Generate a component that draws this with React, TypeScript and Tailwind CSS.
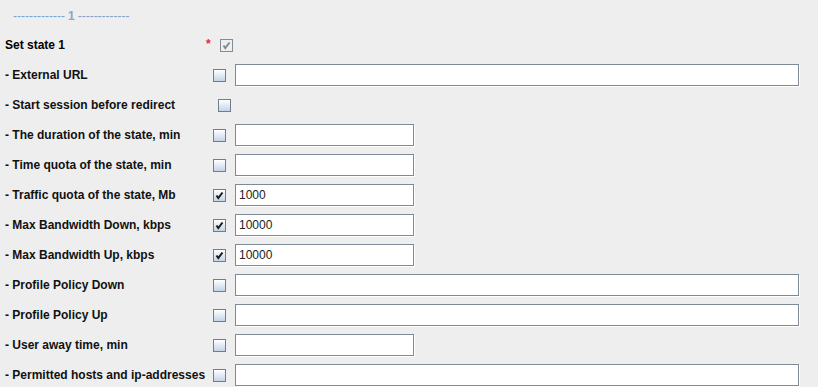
import React from "react";

type Row = {
  label: string;
  checked?: boolean;
  value?: string;
  input?: "wide" | "narrow" | null;
  boxMargin?: string;
};

const rows: Row[] = [
  { label: "- External URL", input: "wide" },
  { label: "- Start session before redirect", input: null, boxMargin: "ml-[5px]" },
  { label: "- The duration of the state, min", input: "narrow" },
  { label: "- Time quota of the state, min", input: "narrow" },
  { label: "- Traffic quota of the state, Mb", input: "narrow", checked: true, value: "1000" },
  { label: "- Max Bandwidth Down, kbps", input: "narrow", checked: true, value: "10000" },
  { label: "- Max Bandwidth Up, kbps", input: "narrow", checked: true, value: "10000" },
  { label: "- Profile Policy Down", input: "wide" },
  { label: "- Profile Policy Up", input: "wide" },
  { label: "- User away time, min", input: "narrow" },
  { label: "- Permitted hosts and ip-addresses", input: "wide" },
];

function CheckBox({ checked, disabled }: { checked?: boolean; disabled?: boolean }) {
  return (
    <span
      className={
        disabled
          ? "flex w-[13px] h-[13px] shrink-0 border border-[#7f8c99] bg-[#eeeeee]"
          : "flex w-[13px] h-[13px] shrink-0 border border-[#6f7e8d] bg-gradient-to-b from-[#ffffff] to-[#c3d4e8]"
      }
    >
      {checked && (
        <svg width="11" height="11" viewBox="0 0 11 11">
          <polyline
            points="2.5,5.5 4.3,8 8.5,2.5"
            fill="none"
            stroke={disabled ? "#7f8b98" : "#1a1a1a"}
            strokeWidth="2"
          />
        </svg>
      )}
    </span>
  );
}

export default function App() {
  return (
    <div className="w-[818px] h-[387px] bg-[#eeeeee] font-['Liberation_Sans',Arial,sans-serif] text-[12px] text-black overflow-hidden">
      <div className="h-[30px] flex items-center pl-[13px] pt-[2px] text-[#7fa2c9]">
        <span>-------------</span>
        <span className="font-bold mx-[3px] text-[#8aa6c4]">1</span>
        <span>-------------</span>
      </div>

      <div className="h-[30px] flex items-center">
        <span className="w-[206px] pl-[5px] font-bold">Set state 1</span>
        <span className="text-[#e8263a] text-[12px] font-bold w-[14px] -mt-[2px]">*</span>
        <CheckBox checked disabled />
      </div>

      {rows.map((r) => (
        <div key={r.label} className="h-[30px] flex items-center">
          <span className="w-[213px] shrink-0 pl-[5px] font-bold whitespace-nowrap text-[#111]">{r.label}</span>
          <span className={r.boxMargin ?? ""}>
            <CheckBox checked={r.checked} />
          </span>
          {r.input && (
            <div
              className={
                (r.input === "wide" ? "w-[564px]" : "w-[179px]") +
                " ml-[9px] h-[22px] bg-white border border-[#7d8a97] shadow-[1px_1px_0_#ffffff] flex items-center pl-[3px] text-[#222]"
              }
            >
              {r.value}
            </div>
          )}
        </div>
      ))}
    </div>
  );
}
